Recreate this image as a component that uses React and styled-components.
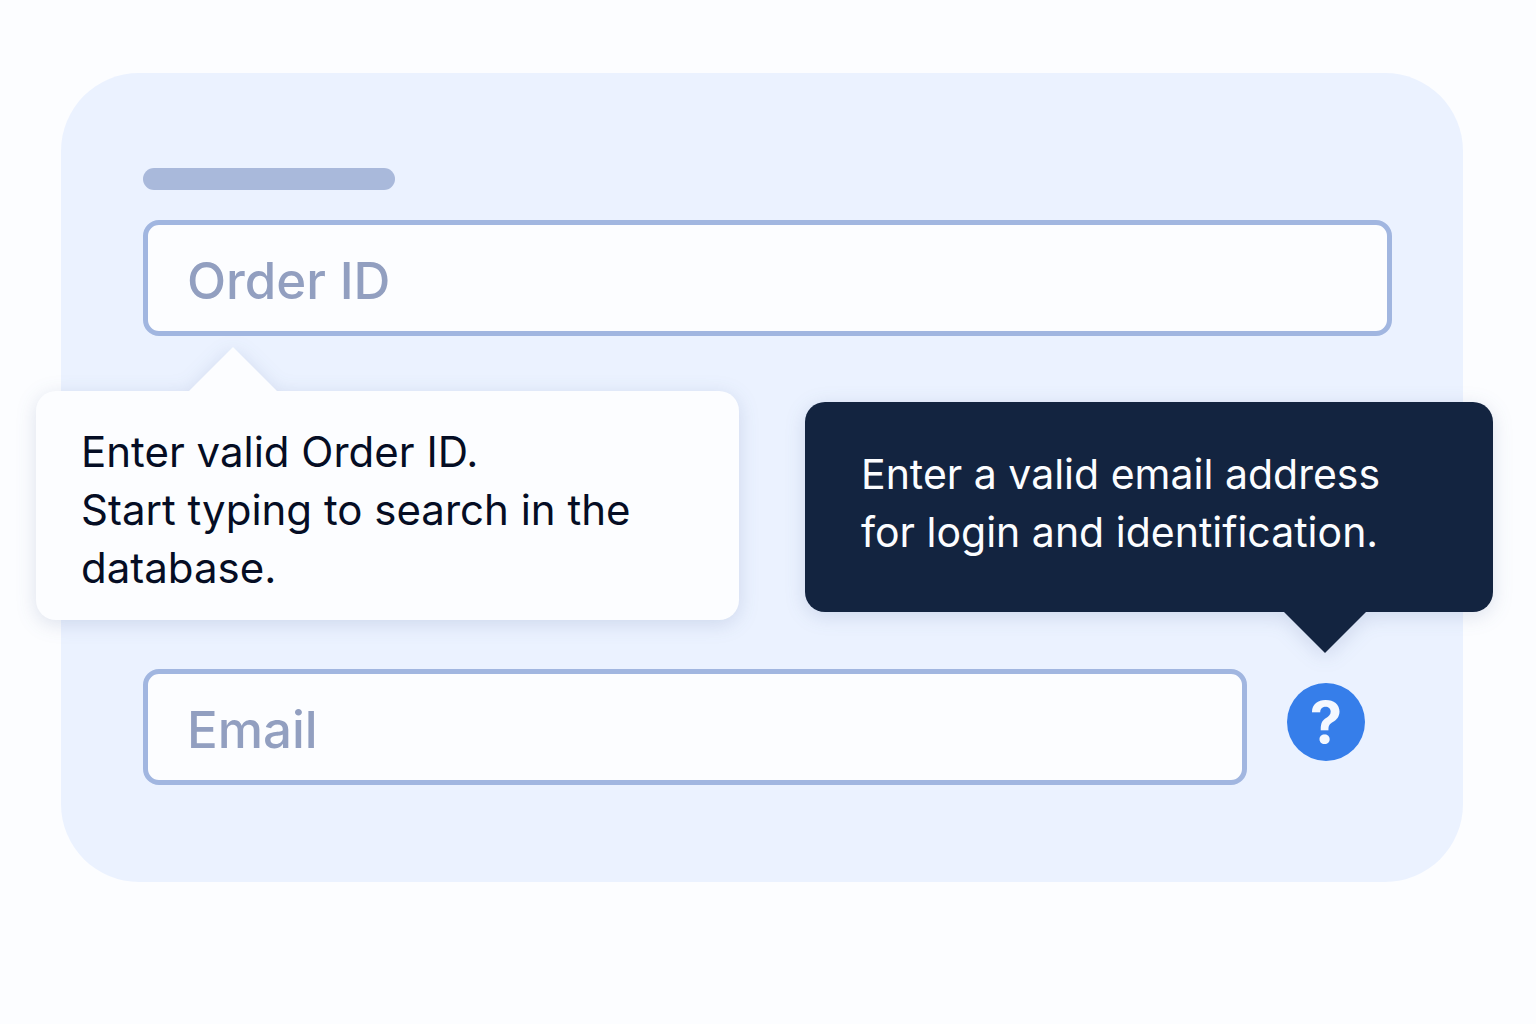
import React from 'react'
import styled, { createGlobalStyle } from 'styled-components'

const GlobalStyle = createGlobalStyle`
  * {
    box-sizing: border-box;
  }
  body {
    margin: 0;
    background: #fcfdff;
    font-family: Inter, "Liberation Sans", sans-serif;
  }
`

const Page = styled.main`
  padding: 73px 73px 73px 61px;
`

const Card = styled.form`
  padding: 95px 71px 97px 82px;
  border-radius: 78px;
  background: #ebf2ff;
`

const LabelBar = styled.div`
  width: 252px;
  height: 22px;
  margin-bottom: 30px;
  border-radius: 11px;
  background: #a9b9db;
`

const Field = styled.div`
  display: flex;
  align-items: flex-start;
  gap: 40px;
  padding-right: ${props => props.$inset || 0}px;
`

const TextInput = styled.input`
  flex: 1;
  min-width: 0;
  height: 116px;
  padding: 4px 39px 0;
  border: 5px solid #a1b6e0;
  border-radius: 16px;
  outline: none;
  background: #fcfdff;
  color: #050d24;
  font-family: inherit;
  font-size: 51px;
  font-weight: 500;
  &::placeholder {
    color: #929fc0;
    opacity: 1;
  }
`

// the bubbles hang over both edges of the card
const TipRow = styled.div`
  display: grid;
  grid-template-columns: 703fr 688fr;
  gap: 66px;
  align-items: start;
  margin: 55px -101px 49px -107px;
`

const Tip = styled.div`
  position: relative;
  border-radius: 20px;
  line-height: 58px;
  filter: drop-shadow(0 4px 10px rgba(40, 70, 130, .15));
  p {
    margin: 0;
  }
  &::after {
    content: "";
    position: absolute;
  }
`

const LightTip = styled(Tip)`
  padding: 32px 45px 23px;
  background: #fcfdff;
  color: #050d24;
  font-size: 42px;
  &::after {
    left: 153px;
    bottom: 100%;
    width: 88px;
    height: 44px;
    background: #fcfdff;
    clip-path: polygon(50% 0, 100% 100%, 0 100%);
  }
`

const DarkTip = styled(Tip)`
  margin-top: 11px;
  padding: 43px 56px 51px;
  background: #132440;
  color: #fcfdff;
  font-size: 41px;
  &::after {
    right: 127px;
    top: 100%;
    width: 82px;
    height: 41px;
    background: #132440;
    clip-path: polygon(0 0, 100% 0, 50% 100%);
  }
`

const HelpButton = styled.button`
  width: 78px;
  height: 78px;
  margin-top: 14px;
  padding: 0;
  border: 0;
  border-radius: 50%;
  background: #367eea;
  color: #f4f8ff;
  font-family: inherit;
  font-size: 58px;
  font-weight: 700;
  line-height: 78px;
`

class App extends React.Component {
  render() {
    return (
      <Page>
        <GlobalStyle />
        <Card>
          <LabelBar />
          <Field>
            <TextInput
              type="text"
              placeholder="Order ID"
              aria-label="Order ID"
              aria-describedby="order-tip"
            />
          </Field>
          <TipRow>
            <LightTip id="order-tip" role="tooltip">
              <p>Enter valid Order ID.</p>
              <p>Start typing to search in the database.</p>
            </LightTip>
            <DarkTip id="email-tip" role="tooltip">
              <p>Enter a valid email address</p>
              <p>for login and identification.</p>
            </DarkTip>
          </TipRow>
          <Field $inset={27}>
            <TextInput
              type="email"
              placeholder="Email"
              aria-label="Email"
              aria-describedby="email-tip"
            />
            <HelpButton type="button" aria-describedby="email-tip">?</HelpButton>
          </Field>
        </Card>
      </Page>
    )
  }
}

export default App
